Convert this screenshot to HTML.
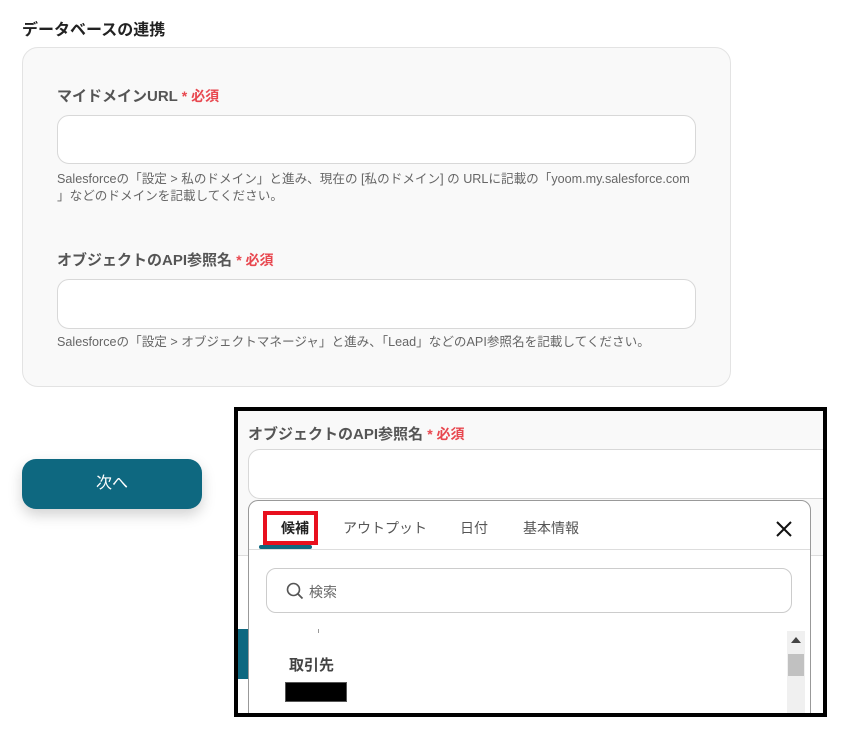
<!DOCTYPE html>
<html><head><meta charset="utf-8"><style>
*{box-sizing:border-box;margin:0;padding:0}
body{width:848px;height:734px;background:#fff;position:relative;overflow:hidden;font-family:"Liberation Sans","Noto Sans CJK JP",sans-serif;color:#333}
.abs{position:absolute}
.lbl{font-size:15px;font-weight:bold;color:#555;white-space:nowrap}
.req{color:#e8474f;font-size:14px;font-weight:bold}
.inp{background:#fff;border:1px solid #d8d8d8;border-radius:12px}
.help{font-size:12.6px;color:#666;white-space:nowrap;line-height:17px}
</style></head><body>
<div class="abs" style="left:22px;top:16px;font-size:16px;font-weight:bold;color:#222">データベースの連携</div>
<div class="abs" style="left:22px;top:47px;width:709px;height:340px;background:#f9f9f9;border:1px solid #e3e3e3;border-radius:16px"></div>
<div class="abs lbl" style="left:57px;top:85px">マイドメインURL <span class="req">*&nbsp;必須</span></div>
<div class="abs inp" style="left:57px;top:115px;width:639px;height:49px"></div>
<div class="abs help" style="left:57px;top:171px">Salesforceの「設定 &gt; 私のドメイン」と進み、現在の [私のドメイン] の URLに記載の「yoom.my.salesforce.com<br>」などのドメインを記載してください。</div>
<div class="abs lbl" style="left:57px;top:249px">オブジェクトのAPI参照名 <span class="req">*&nbsp;必須</span></div>
<div class="abs inp" style="left:57px;top:279px;width:639px;height:50px"></div>
<div class="abs help" style="left:57px;top:334px">Salesforceの「設定 &gt; オブジェクトマネージャ」と進み、「Lead」などのAPI参照名を記載してください。</div>
<div class="abs" style="left:22px;top:459px;width:180px;height:50px;background:#0e6880;border-radius:14px;box-shadow:0 6px 14px rgba(0,0,0,.18);color:#fff;font-size:16px;text-align:center;line-height:50px">次へ</div>

<div class="abs" style="left:234px;top:407px;width:593px;height:310px;border:4px solid #000;background:#fff;overflow:hidden">
 <div class="abs" style="left:0;top:0;width:585px;height:145px;background:#f9f9f9;border-bottom:1px solid #ddd"></div>
 <div class="abs lbl" style="left:10px;top:12px">オブジェクトのAPI参照名 <span class="req">*&nbsp;必須</span></div>
 <div class="abs inp" style="left:10px;top:38px;width:600px;height:50px"></div>
 <div class="abs" style="left:0;top:218px;width:12px;height:50px;background:#0e6880"></div>
 <div class="abs" style="left:10px;top:89px;width:563px;height:240px;background:#fff;border:1px solid #999;border-radius:10px">
  <div class="abs" style="left:14px;top:10px;width:55px;height:34px;border:4px solid #e8101e"></div>
  <div class="abs" style="left:10px;top:44px;width:53px;height:4px;background:#0e6880;border-radius:2px"></div>
  <div class="abs" style="left:0;top:48px;width:561px;height:1px;background:#ddd"></div>
  <div class="abs" style="left:32px;top:17px;font-size:14px;font-weight:bold;color:#222">候補</div>
  <div class="abs" style="left:94px;top:17px;font-size:14px;color:#555">アウトプット</div>
  <div class="abs" style="left:211px;top:17px;font-size:14px;color:#555">日付</div>
  <div class="abs" style="left:274px;top:17px;font-size:14px;color:#555">基本情報</div>
  <svg class="abs" style="left:526px;top:19px" width="18" height="18" viewBox="0 0 18 18"><path d="M2 2L16 16M16 2L2 16" stroke="#111" stroke-width="2"/></svg>
  <div class="abs" style="left:17px;top:67px;width:526px;height:45px;border:1px solid #ccc;border-radius:10px"></div>
  <svg class="abs" style="left:37px;top:81px" width="18" height="18" viewBox="0 0 18 18"><circle cx="7.5" cy="7.5" r="6" fill="none" stroke="#555" stroke-width="1.6"/><path d="M12 12L16.5 16.5" stroke="#555" stroke-width="1.8"/></svg>
  <div class="abs" style="left:60px;top:81px;font-size:14px;color:#666">検索</div>
  <div class="abs" style="left:69px;top:128px;width:1px;height:4px;background:#999"></div>
  <div class="abs" style="left:40px;top:153px;font-size:15px;font-weight:bold;color:#444">取引先</div>
  <div class="abs" style="left:36px;top:181px;width:62px;height:20px;background:#000;border:1px solid #555"></div>
  <div class="abs" style="left:538px;top:130px;width:18px;height:110px;background:#f0f0f0"></div>
  <div class="abs" style="left:542px;top:136px;width:0;height:0;border-left:5px solid transparent;border-right:5px solid transparent;border-bottom:6px solid #444"></div>
  <div class="abs" style="left:539px;top:153px;width:16px;height:22px;background:#c1c1c1"></div>
 </div>
</div>
</body></html>
